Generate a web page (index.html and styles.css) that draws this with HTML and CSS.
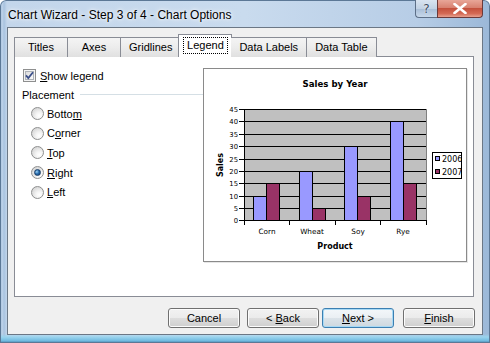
FILE: index.html
```html
<!DOCTYPE html>
<html>
<head>
<meta charset="utf-8">
<link rel="stylesheet" href="styles.css">
</head>
<body>
<div class="window">
  <div class="titlebar">
    <span class="title">Chart Wizard - Step 3 of 4 - Chart Options</span>
    <div class="caption-btns">
      <div class="cb help">?</div>
      <div class="cb close">
        <svg width="14" height="11" viewBox="0 0 14 11"><path d="M1.5 1 L12.5 10 M12.5 1 L1.5 10" stroke="#fff" stroke-width="2.6" stroke-linecap="round"/></svg>
      </div>
    </div>
  </div>
  <div class="client">
    <div class="tabs">
      <div class="tab">Titles</div>
      <div class="tab">Axes</div>
      <div class="tab">Gridlines</div>
      <div class="tab selected"><span class="focus">Legend</span></div>
      <div class="tab">Data Labels</div>
      <div class="tab">Data Table</div>
    </div>
    <div class="pane">
      <div class="options">
        <div class="check-row">
          <svg class="checkbox" width="13" height="13" viewBox="0 0 13 13">
            <defs><linearGradient id="cbg" x1="0" y1="0" x2="1" y2="1"><stop offset="0" stop-color="#dcdcdc"/><stop offset="1" stop-color="#fbfbfb"/></linearGradient></defs>
            <rect x="0.5" y="0.5" width="12" height="12" fill="#f4f4f4" stroke="#8e8f8f"/>
            <rect x="2.5" y="2.5" width="8" height="8" fill="url(#cbg)" stroke="#aeb3b9"/>
            <path d="M3 6.3 L5.3 9 L10 3.2" fill="none" stroke="#3b4f8a" stroke-width="1.8"/>
          </svg>
          <span><u>S</u>how legend</span>
        </div>
        <div class="group-label"><span>Placement</span><div class="group-line"></div></div>
        <div class="radios">
          <div class="radio-row"><span class="radio"></span><span>Botto<u>m</u></span></div>
          <div class="radio-row"><span class="radio"></span><span>C<u>o</u>rner</span></div>
          <div class="radio-row"><span class="radio"></span><span><u>T</u>op</span></div>
          <div class="radio-row"><span class="radio on"></span><span><u>R</u>ight</span></div>
          <div class="radio-row"><span class="radio"></span><span><u>L</u>eft</span></div>
        </div>
      </div>
      <div class="preview">
        <svg width="262" height="192" viewBox="0 0 262 192" shape-rendering="crispEdges">
          <text class="ct-title" x="131" y="18" text-anchor="middle">Sales by Year</text>
          <rect x="40.5" y="40.5" width="182" height="111" fill="#c0c0c0" stroke="#808080"/>
          <g stroke="#000" stroke-width="1">
            <line x1="40" y1="40.5" x2="222" y2="40.5"/>
            <line x1="40" y1="52.5" x2="222" y2="52.5"/>
            <line x1="40" y1="65.5" x2="222" y2="65.5"/>
            <line x1="40" y1="77.5" x2="222" y2="77.5"/>
            <line x1="40" y1="90.5" x2="222" y2="90.5"/>
            <line x1="40" y1="102.5" x2="222" y2="102.5"/>
            <line x1="40" y1="114.5" x2="222" y2="114.5"/>
            <line x1="40" y1="127.5" x2="222" y2="127.5"/>
            <line x1="40" y1="139.5" x2="222" y2="139.5"/>
            <line x1="35" y1="40.5" x2="40" y2="40.5"/>
            <line x1="35" y1="52.5" x2="40" y2="52.5"/>
            <line x1="35" y1="65.5" x2="40" y2="65.5"/>
            <line x1="35" y1="77.5" x2="40" y2="77.5"/>
            <line x1="35" y1="90.5" x2="40" y2="90.5"/>
            <line x1="35" y1="102.5" x2="40" y2="102.5"/>
            <line x1="35" y1="114.5" x2="40" y2="114.5"/>
            <line x1="35" y1="127.5" x2="40" y2="127.5"/>
            <line x1="35" y1="139.5" x2="40" y2="139.5"/>
            <line x1="35" y1="151.5" x2="40" y2="151.5"/>
          </g>
          <g stroke="#000" stroke-width="1">
            <rect x="49.5" y="127.5" width="13" height="24" fill="#9999ff"/>
            <rect x="62.5" y="114.5" width="13" height="37" fill="#993366"/>
            <rect x="95.5" y="102.5" width="13" height="49" fill="#9999ff"/>
            <rect x="108.5" y="139.5" width="13" height="12" fill="#993366"/>
            <rect x="140.5" y="77.5" width="13" height="74" fill="#9999ff"/>
            <rect x="153.5" y="127.5" width="13" height="24" fill="#993366"/>
            <rect x="186.5" y="52.5" width="13" height="99" fill="#9999ff"/>
            <rect x="199.5" y="114.5" width="13" height="37" fill="#993366"/>
          </g>
          <g stroke="#000" stroke-width="1">
            <line x1="40.5" y1="40" x2="40.5" y2="152"/>
            <line x1="40" y1="151.5" x2="223" y2="151.5"/>
            <line x1="40.5" y1="151" x2="40.5" y2="156"/>
            <line x1="85.5" y1="151" x2="85.5" y2="156"/>
            <line x1="131.5" y1="151" x2="131.5" y2="156"/>
            <line x1="176.5" y1="151" x2="176.5" y2="156"/>
            <line x1="222.5" y1="151" x2="222.5" y2="156"/>
          </g>
          <g class="ct-ylab" text-anchor="end">
            <text x="34" y="43">45</text>
            <text x="34" y="55">40</text>
            <text x="34" y="68">35</text>
            <text x="34" y="80">30</text>
            <text x="34" y="93">25</text>
            <text x="34" y="105">20</text>
            <text x="34" y="117">15</text>
            <text x="34" y="130">10</text>
            <text x="34" y="142">5</text>
            <text x="34" y="154">0</text>
          </g>
          <g class="ct-cat" text-anchor="middle">
            <text x="63" y="165">Corn</text>
            <text x="108" y="165">Wheat</text>
            <text x="154" y="165">Soy</text>
            <text x="199" y="165">Rye</text>
          </g>
          <text class="ct-axis" x="131" y="180" text-anchor="middle">Product</text>
          <text class="ct-axis" transform="translate(19 96) rotate(-90)" text-anchor="middle">Sales</text>
          <defs><clipPath id="lg"><rect x="228" y="83" width="29" height="27"/></clipPath></defs>
          <rect x="228.5" y="83.5" width="29" height="26" fill="#fff" stroke="#000"/>
          <g clip-path="url(#lg)">
            <rect x="231.5" y="87.5" width="4" height="4" fill="#9999ff" stroke="#000"/>
            <rect x="231.5" y="100.5" width="4" height="4" fill="#993366" stroke="#000"/>
            <text class="ct-leg" x="238" y="92.5">2006</text>
            <text class="ct-leg" x="238" y="105.5">2007</text>
          </g>
        </svg>
      </div>
    </div>
    <div class="buttons">
      <div class="btn"><span>Cancel</span></div>
      <div class="btn back"><span>&lt; <u>B</u>ack</span></div>
      <div class="btn next default"><span><u>N</u>ext &gt;</span></div>
      <div class="btn finish"><span><u>F</u>inish</span></div>
    </div>
  </div>
</div>
</body>
</html>
```
FILE: styles.css
```css
html, body {
  margin: 0;
  padding: 0;
  background: #ffffff;
}
body {
  font-family: "Liberation Sans", Arial, sans-serif;
  font-size: 11px;
  color: #000;
}
.window {
  width: 490px;
  height: 343px;
  box-sizing: border-box;
  padding: 0 7px 8px 7px;
  display: flex;
  flex-direction: column;
  border-radius: 6px 6px 0 0;
  background:
    linear-gradient(to bottom, rgba(255,255,255,0) 0, rgba(255,255,255,0) 334px, #9ad4ee 337px, #6fb9df 341px, #3d6d94 343px),
    linear-gradient(to right, #8fb0d2 0, #c0d4ea 2px, #a9c3df 4px, #c3d6eb 7px, #c9dbee 50%, #b7cde6 85%, #9bb8d8 100%);
  box-shadow: inset 0 0 0 1px #5c7896;
}
.titlebar {
  height: 27px;
  display: flex;
  justify-content: space-between;
  align-items: flex-start;
  flex-shrink: 0;
}
.title {
  font-size: 12px;
  margin: 8px 0 0 1px;
  color: #000;
  text-shadow: 0 0 6px #fff, 0 0 3px #fff;
}
.caption-btns {
  display: flex;
  height: 18px;
  margin-top: 0;
}
.cb {
  height: 18px;
  box-sizing: border-box;
  display: flex;
  align-items: center;
  justify-content: center;
  border: 1px solid #5d6f87;
  border-top: none;
}
.help {
  width: 22px;
  border-radius: 0 0 0 4px;
  border-right: none;
  background: linear-gradient(to bottom, #d9e4f0 0, #c2d2e4 50%, #a8bdd6 51%, #c7d8ea 100%);
  color: #3d4e63;
  font-size: 12px;
  font-family: "DejaVu Sans", sans-serif;
  text-shadow: 0 0 2px #fff;
}
.close {
  width: 46px;
  border-radius: 0 0 4px 0;
  background: linear-gradient(to bottom, #e8a698 0, #d88170 45%, #c4513d 50%, #d46a55 80%, #e7a190 100%);
  border-color: #6b3a3a;
}
.client {
  flex: 1;
  background: #f0f0f0;
  border: 1px solid #6b7785;
  padding: 7px 8px 0 6px;
  display: flex;
  flex-direction: column;
}
.tabs {
  display: flex;
  align-items: flex-end;
  height: 22px;
  position: relative;
  z-index: 1;
  margin-bottom: -1px;
}
.tab {
  height: 20px;
  box-sizing: border-box;
  min-width: 54px;
  padding: 2px 8px 0 8px;
  text-align: center;
  border: 1px solid #898c95;
  border-bottom: none;
  margin-right: -1px;
  background: linear-gradient(to bottom, #f4f4f4 0, #ececec 50%, #e0e0e0 100%);
  white-space: nowrap;
  line-height: 15px;
}
.tab.selected {
  height: 23px;
  background: #fff;
  margin: 0 -1px 0 -2px;
  padding: 2px 4px 0 4px;
  border-color: #898c95;
}
.focus {
  display: inline-block;
  outline: 1px dotted #000;
  padding: 0 3px;
  line-height: 15px;
  margin-top: 1px;
}
.tab.selected + .tab {
  border-left: none;
}
.pane {
  height: 241px;
  box-sizing: border-box;
  background: #fff;
  border: 1px solid #898c95;
  display: flex;
  padding: 11px 6px 0 7px;
}
.options {
  width: 181px;
  display: flex;
  flex-direction: column;
}
.check-row {
  display: flex;
  align-items: center;
  height: 13px;
  margin-left: 1px;
  gap: 4px;
  margin-top: 1px;
}
.checkbox {
  display: block;
  flex-shrink: 0;
}
.group-label {
  display: flex;
  align-items: center;
  margin-top: 6px;
  height: 13px;
}
.group-line {
  flex: 1;
  height: 1px;
  background: #d5dfe5;
  margin-left: 6px;
  margin-right: 0;
}
.radios {
  display: flex;
  flex-direction: column;
  margin-top: 3px;
  padding-left: 9px;
}
.radio-row {
  display: flex;
  align-items: center;
  height: 19.6px;
  gap: 3px;
}
.radio {
  width: 13px;
  height: 13px;
  box-sizing: border-box;
  border-radius: 50%;
  border: 1px solid #8e8f8f;
  background: radial-gradient(circle at 65% 70%, #ffffff 0, #f4f4f4 30%, #d8d8d8 75%, #c8c8c8 100%);
  flex-shrink: 0;
  display: flex;
  align-items: center;
  justify-content: center;
}
.radio.on::after {
  content: "";
  width: 5px;
  height: 5px;
  border-radius: 50%;
  background: radial-gradient(circle at 35% 35%, #9fd3f5 0, #2a6fb0 45%, #0d3b6e 100%);
  border: 1px solid #1b3f69;
}
.preview {
  width: 264px;
  height: 194px;
  box-sizing: border-box;
  border: 1px solid #8a8a8a;
  background: #fff;
  margin-left: auto;
  box-shadow: 1px 1px 0 #e6e6e6;
}
.preview svg {
  display: block;
}
.ct-title {
  font-family: "DejaVu Sans", sans-serif;
  font-weight: bold;
  font-size: 8.6px;
}
.ct-axis {
  font-family: "DejaVu Sans", sans-serif;
  font-weight: bold;
  font-size: 8px;
}
.ct-ylab {
  font-family: "DejaVu Sans", sans-serif;
  font-size: 6.8px;
}
.ct-cat {
  font-family: "DejaVu Sans", sans-serif;
  font-size: 7.3px;
}
.ct-leg {
  font-family: "DejaVu Sans", sans-serif;
  font-size: 8px;
}
.buttons {
  display: flex;
  justify-content: flex-end;
  margin-top: 11px;
  margin-right: -1px;
}
.btn {
  width: 72px;
  height: 20px;
  box-sizing: border-box;
  border: 1px solid #707070;
  border-radius: 3px;
  background: linear-gradient(to bottom, #f2f2f2 0, #ebebeb 50%, #dddddd 51%, #cfcfcf 100%);
  box-shadow: inset 0 0 0 1px #fcfcfc;
  display: flex;
  align-items: center;
  justify-content: center;
  font-size: 11px;
}
.back { margin-left: 7px; }
.next { margin-left: 3px; }
.finish { margin-left: 9px; }
.default {
  border-color: #3c7fb1;
  box-shadow: inset 0 0 0 1px #a7d9f5;
  background: linear-gradient(to bottom, #f3f7fa 0, #eaeff3 50%, #dbe3e9 51%, #ced8df 100%);
}
```
